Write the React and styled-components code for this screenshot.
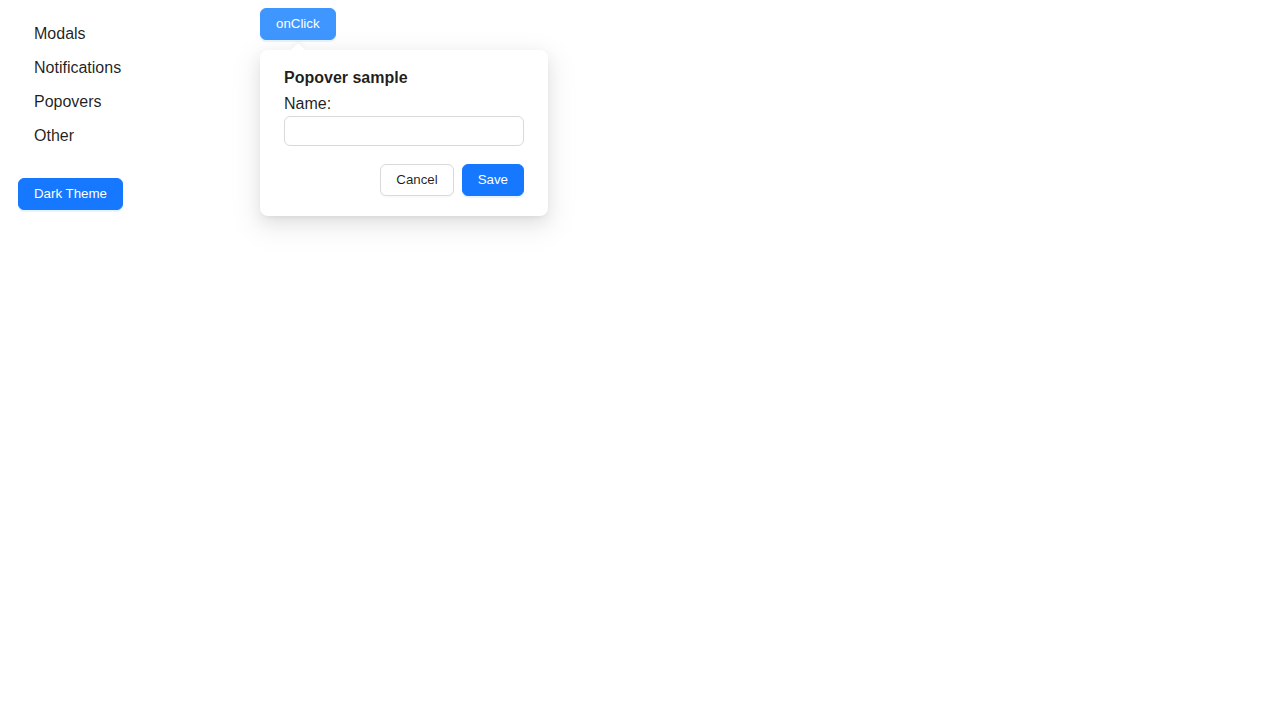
import React from "react";
import styled, { createGlobalStyle } from "styled-components";

const Global = createGlobalStyle`
  html, body { margin: 0; padding: 0; background: #fff; }
  body { font-family: "Liberation Sans", Arial, sans-serif; color: rgba(0,0,0,0.88); }
  * { box-sizing: border-box; }
`;

const Layout = styled.div`
  display: flex;
  min-height: 720px;
`;

const Sidebar = styled.aside`
  width: 260px;
  flex: 0 0 260px;
  padding: 17px 0 0 18px;
  display: flex;
  flex-direction: column;
  align-items: flex-start;
`;

const Menu = styled.ul`
  list-style: none;
  margin: 0 0 25px;
  padding: 0;
`;

const MenuItem = styled.li`
  height: 34px;
  line-height: 34px;
  padding: 0 16px;
  font-size: 16px;
  color: rgba(0,0,0,0.88);
`;

const Button = styled.button`
  font-family: "Liberation Sans", Arial, sans-serif;
  font-size: 13.3px;
  height: 32px;
  padding: 0 15px 2px;
  border-radius: 6px;
  cursor: pointer;
  border: 1px solid ${(p) => (p.$variant === "default" ? "#d9d9d9" : p.$hover ? "#4096ff" : "#1677ff")};
  background: ${(p) => (p.$variant === "default" ? "#fff" : p.$hover ? "#4096ff" : "#1677ff")};
  color: ${(p) => (p.$variant === "default" ? "rgba(0,0,0,0.88)" : "#fff")};
  box-shadow: ${(p) => (p.$variant === "default" ? "0 2px 0 rgba(0,0,0,0.02)" : "0 2px 0 rgba(5,145,255,0.1)")};
`;

const Main = styled.main`
  flex: 1;
  padding-top: 8px;
`;

const Anchor = styled.div`
  position: relative;
  display: inline-block;
`;

const Popover = styled.div`
  position: absolute;
  top: 42px;
  left: 0;
  width: 288px;
  background: #fff;
  border-radius: 8px;
  padding: 17px 24px 20px;
  box-shadow: 0 6px 16px 0 rgba(0,0,0,0.08), 0 3px 6px -4px rgba(0,0,0,0.12), 0 9px 28px 8px rgba(0,0,0,0.05);
`;

const Arrow = styled.span`
  position: absolute;
  top: -5px;
  left: 33px;
  width: 10px;
  height: 10px;
  background: #fff;
  transform: rotate(45deg);
  border-top-left-radius: 2px;
  box-shadow: -2px -2px 5px rgba(0,0,0,0.04);
`;

const Title = styled.div`
  font-size: 16px;
  font-weight: 700;
  line-height: 22px;
  margin-bottom: 4px;
`;

const Label = styled.label`
  display: block;
  font-size: 16px;
  line-height: 22px;
`;

const Input = styled.input`
  display: block;
  width: 100%;
  height: 30px;
  margin-top: 1px;
  border: 1px solid #d9d9d9;
  border-radius: 6px;
  padding: 4px 11px;
  font-size: 14px;
  font-family: inherit;
  outline: none;
`;

const Actions = styled.div`
  display: flex;
  justify-content: flex-end;
  gap: 8px;
  margin-top: 18px;
`;

export default function App() {
  return (
    <>
      <Global />
      <Layout>
        <Sidebar>
          <Menu>
            <MenuItem>Modals</MenuItem>
            <MenuItem>Notifications</MenuItem>
            <MenuItem>Popovers</MenuItem>
            <MenuItem>Other</MenuItem>
          </Menu>
          <Button>Dark Theme</Button>
        </Sidebar>
        <Main>
          <Anchor>
            <Button $hover>onClick</Button>
            <Popover>
              <Arrow />
              <Title>Popover sample</Title>
              <Label>Name:</Label>
              <Input />
              <Actions>
                <Button $variant="default">Cancel</Button>
                <Button>Save</Button>
              </Actions>
            </Popover>
          </Anchor>
        </Main>
      </Layout>
    </>
  );
}
